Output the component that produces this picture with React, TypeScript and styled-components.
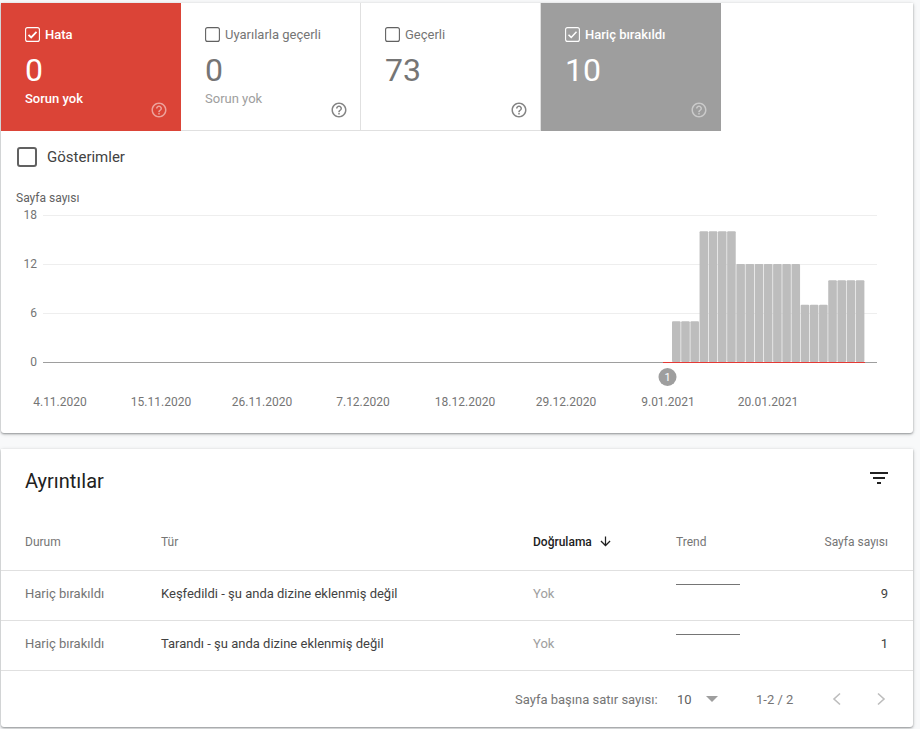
import React from 'react';
import styled, {createGlobalStyle} from 'styled-components';

const GlobalStyle = createGlobalStyle`
  html, body {
    margin: 0;
    padding: 0;
    background: #f8f9fa;
    font-family: Roboto, "Liberation Sans", sans-serif;
    color: #212121;
  }
`;

const Page = styled.div`
  display: grid;
  grid-row-gap: 16px;
  width: 912px;
  padding: 3px 0 2px 1px;
`;

const Card = styled.section`
  background: #fff;
  border-radius: 0 0 3px 3px;
  box-shadow: 0 1px 2px rgba(60, 64, 67, 0.45), 0 1px 4px rgba(60, 64, 67, 0.2);
  overflow: hidden;
`;

const Tiles = styled.div`
  display: flex;
  height: 128px;
`;

const tileColors = {
  error: {bg: '#db4437', fg: '#fff', sub: '#fff', num: '#fff', help: 'rgba(255,255,255,0.5)'},
  plain: {bg: '#fff', fg: '#757575', sub: '#9e9e9e', num: '#757575', help: '#858585'},
  excluded: {bg: '#9e9e9e', fg: '#fff', sub: '#fff', num: '#fff', help: 'rgba(255,255,255,0.45)'},
};

type TileKind = keyof typeof tileColors;

const TileBox = styled.div<{$kind: TileKind}>`
  box-sizing: border-box;
  width: 180px;
  display: flex;
  flex-direction: column;
  padding: 22px 13px 12px 24px;
  background: ${({$kind}) => tileColors[$kind].bg};
  color: ${({$kind}) => tileColors[$kind].fg};
  ${({$kind}) =>
    $kind === 'plain' &&
    `
    padding-right: 12px;
    padding-bottom: 11px;
    border-bottom: 1px solid #e0e0e0;
    border-right: 1px solid #e0e0e0;
  `}
`;

const TileLabel = styled.div<{$on: boolean}>`
  display: flex;
  align-items: center;
  flex: none;
  height: 18px;
  font-size: 13px;
  font-weight: ${({$on}) => ($on ? 500 : 400)};
  white-space: nowrap;
`;

const SmallCheck = styled.svg`
  width: 15px;
  height: 15px;
  margin-right: 5px;
  flex: none;
`;

const TileNumber = styled.div<{$kind: TileKind}>`
  flex: none;
  margin-top: 7px;
  font-size: 32px;
  line-height: 40px;
  font-weight: 400;
  color: ${({$kind}) => tileColors[$kind].num};
`;

const TileFoot = styled.div`
  display: flex;
  flex: none;
  height: 29px;
  margin-top: auto;
  align-items: flex-end;
`;

const TileSub = styled.div<{$kind: TileKind}>`
  align-self: flex-start;
  font-size: 13px;
  line-height: 18px;
  font-weight: ${({$kind}) => ($kind === 'error' ? 500 : 400)};
  color: ${({$kind}) => tileColors[$kind].sub};
`;

const HelpIcon = styled.svg<{$kind: TileKind}>`
  flex: none;
  width: 18px;
  height: 18px;
  margin-left: auto;
  fill: ${({$kind}) => tileColors[$kind].help};
`;

const ImpressionsRow = styled.label`
  display: flex;
  align-items: center;
  height: 20px;
  padding: 16px 0 0 16px;
  font-size: 15px;
  color: #424242;
`;

const ImpressionsBox = styled.span`
  box-sizing: border-box;
  width: 20px;
  height: 20px;
  margin-right: 10px;
  border: 2px solid #616161;
  border-radius: 3px;
`;

const ChartTitle = styled.div`
  margin: 24px 0 0 15px;
  font-size: 12px;
  line-height: 14px;
  color: #616161;
`;

const ChartSvg = styled.svg`
  display: block;
  width: 912px;
  height: 228px;
  font-family: Roboto, "Liberation Sans", sans-serif;
`;

const DetailsHeader = styled.div`
  display: flex;
  justify-content: space-between;
  align-items: center;
  height: 64px;
  padding: 0 22px 0 24px;
`;

const DetailsTitle = styled.h2`
  margin: 0;
  font-size: 20px;
  font-weight: 400;
  color: #212121;
`;

const FilterIcon = styled.svg`
  width: 24px;
  height: 24px;
  margin-top: -6px;
  fill: #212121;
`;

const Row = styled.div<{$head?: boolean}>`
  display: grid;
  grid-template-columns: 136px 372px 143px 1fr;
  align-items: center;
  box-sizing: border-box;
  height: ${({$head}) => ($head ? '58px' : '50px')};
  padding: 0 25px ${({$head}) => ($head ? '0' : '5px')} 24px;
  border-bottom: 1px solid #e0e0e0;
  font-size: ${({$head}) => ($head ? '12px' : '13px')};
`;

const Muted = styled.div`
  color: #757575;
`;

const Strong = styled.div`
  color: #424242;
`;

const Soft = styled.div`
  color: #9e9e9e;
`;

const SortHead = styled.div`
  display: flex;
  align-items: center;
  font-weight: 500;
  color: #212121;
`;

const SortArrow = styled.svg`
  width: 15px;
  height: 15px;
  margin-left: 6px;
  fill: #212121;
`;

const TrendCell = styled.div`
  display: flex;
  justify-content: space-between;
  align-items: center;
`;

const Spark = styled.svg`
  width: 64px;
  height: 1px;
  margin-bottom: 18px;
`;

const Footer = styled.div`
  display: flex;
  align-items: center;
  height: 56px;
  padding-left: 514px;
  font-size: 13px;
  color: #757575;

  > * {
    flex: none;
  }
`;

const PerPage = styled.span`
  width: 162px;
`;

const PerPageValue = styled.span`
  width: 29px;
  font-size: 13px;
  color: #616161;
`;

const Caret = styled.span`
  width: 0;
  height: 0;
  margin-right: 38px;
  border-left: 6px solid transparent;
  border-right: 6px solid transparent;
  border-top: 6px solid #9e9e9e;
`;

const PageRange = styled.span`
  width: 75px;
`;

const Chevron = styled.svg`
  width: 12px;
  height: 14px;
  margin-right: 32px;
  fill: none;
  stroke: #bdbdbd;
  stroke-width: 1.6;
`;

const HELP_PATH =
  'M11 18h2v-2h-2v2zm1-16C6.48 2 2 6.48 2 12s4.48 10 10 10 10-4.48 10-10S17.52 2 12 2zm0 18c-4.41 0-8-3.59-8-8s3.59-8 8-8 8 3.59 8 8-3.59 8-8 8zm0-14c-2.21 0-4 1.79-4 4h2c0-1.1.9-2 2-2s2 .9 2 2c0 2-3 1.75-3 5h2c0-2.25 3-2.5 3-5 0-2.21-1.79-4-4-4z';

const tiles: {kind: TileKind; label: string; value: string; sub?: string; on: boolean}[] = [
  {kind: 'error', label: 'Hata', value: '0', sub: 'Sorun yok', on: true},
  {kind: 'plain', label: 'Uyarılarla geçerli', value: '0', sub: 'Sorun yok', on: false},
  {kind: 'plain', label: 'Geçerli', value: '73', on: false},
  {kind: 'excluded', label: 'Hariç bırakıldı', value: '10', on: true},
];

const bars = [5, 5, 5, 16, 16, 16, 16, 12, 12, 12, 12, 12, 12, 12, 7, 7, 7, 10, 10, 10, 10];
const ticks = [18, 12, 6];
const dates = [
  {x: 59, label: '4.11.2020'},
  {x: 160, label: '15.11.2020'},
  {x: 261, label: '26.11.2020'},
  {x: 362, label: '7.12.2020'},
  {x: 464, label: '18.12.2020'},
  {x: 565, label: '29.12.2020'},
  {x: 667, label: '9.01.2021'},
  {x: 767, label: '20.01.2021'},
];

// chart svg starts at page y 205, page x 1
const zeroY = 157;
const unit = 147 / 18;
const barLeft = 671;
const barWidth = 193 / 21;

function Chart() {
  return (
    <ChartSvg viewBox="0 0 912 228">
      {ticks.map(t => (
        <g key={t}>
          <line x1="42" x2="876" y1={Math.round(zeroY - t * unit) + 0.5} y2={Math.round(zeroY - t * unit) + 0.5} stroke="#eeeeee" />
          <text x="36" y={zeroY - t * unit + 4} textAnchor="end" fontSize="12" fill="#757575">
            {t}
          </text>
        </g>
      ))}
      <text x="36" y={zeroY + 4} textAnchor="end" fontSize="12" fill="#757575">
        0
      </text>
      {bars.map((b, i) => (
        <rect
          key={i}
          x={barLeft + i * barWidth}
          y={zeroY - b * unit}
          width={barWidth - 0.6}
          height={b * unit}
          rx="1"
          fill="#bdbdbd"
        />
      ))}
      <rect x="42" y={zeroY} width="834" height="1" fill="#9e9e9e" />
      <rect x="662" y={zeroY} width="202" height="1" fill="#e53935" />
      <circle cx="666.5" cy="172" r="9" fill="#9e9e9e" />
      <text x="666.5" y="176" textAnchor="middle" fontSize="11" fill="#fff">
        1
      </text>
      {dates.map(d => (
        <text key={d.label} x={d.x} y="201" textAnchor="middle" fontSize="12" fill="#757575">
          {d.label}
        </text>
      ))}
    </ChartSvg>
  );
}

function TileCheck({on, kind}: {on: boolean; kind: TileKind}) {
  const stroke = on ? '#fff' : '#616161';
  return (
    <SmallCheck viewBox="0 0 15 15">
      <rect x="0.6" y="0.6" width="13.8" height="13.8" rx="2" fill="none" stroke={stroke} strokeWidth="1.1" />
      {on && <path d="M3.5 7.8l2.7 2.6 5.3-5.6" fill="none" stroke="#fff" strokeWidth={kind === 'error' ? 1.8 : 1.5} />}
    </SmallCheck>
  );
}

const rows = [
  {type: 'Keşfedildi - şu anda dizine eklenmiş değil', count: '9'},
  {type: 'Tarandı - şu anda dizine eklenmiş değil', count: '1'},
];

export default function App() {
  return (
    <>
      <GlobalStyle />
      <Page>
        <Card>
          <Tiles>
            {tiles.map(t => (
              <TileBox key={t.label} $kind={t.kind}>
                <TileLabel $on={t.on}>
                  <TileCheck on={t.on} kind={t.kind} />
                  {t.label}
                </TileLabel>
                <TileNumber $kind={t.kind}>{t.value}</TileNumber>
                <TileFoot>
                  {t.sub && <TileSub $kind={t.kind}>{t.sub}</TileSub>}
                  <HelpIcon $kind={t.kind} viewBox="0 0 24 24">
                    <path d={HELP_PATH} />
                  </HelpIcon>
                </TileFoot>
              </TileBox>
            ))}
          </Tiles>
          <ImpressionsRow>
            <ImpressionsBox />
            Gösterimler
          </ImpressionsRow>
          <ChartTitle>Sayfa sayısı</ChartTitle>
          <Chart />
        </Card>
        <Card>
          <DetailsHeader>
            <DetailsTitle>Ayrıntılar</DetailsTitle>
            <FilterIcon viewBox="0 0 24 24">
              <path d="M10 18h4v-2h-4v2zM3 6v2h18V6H3zm3 7h12v-2H6v2z" />
            </FilterIcon>
          </DetailsHeader>
          <Row $head>
            <Muted>Durum</Muted>
            <Muted>Tür</Muted>
            <SortHead>
              Doğrulama
              <SortArrow viewBox="0 0 24 24">
                <path d="M20 12l-1.41-1.41L13 16.17V4h-2v12.17l-5.58-5.59L4 12l8 8 8-8z" />
              </SortArrow>
            </SortHead>
            <TrendCell>
              <Muted>Trend</Muted>
              <Muted>Sayfa sayısı</Muted>
            </TrendCell>
          </Row>
          {rows.map(r => (
            <Row key={r.count}>
              <Muted>Hariç bırakıldı</Muted>
              <Strong>{r.type}</Strong>
              <Soft>Yok</Soft>
              <TrendCell>
                <Spark viewBox="0 0 64 1">
                  <rect width="64" height="1" fill="#757575" />
                </Spark>
                <Strong>{r.count}</Strong>
              </TrendCell>
            </Row>
          ))}
          <Footer>
            <PerPage>Sayfa başına satır sayısı:</PerPage>
            <PerPageValue>10</PerPageValue>
            <Caret />
            <PageRange>1-2 / 2</PageRange>
            <Chevron viewBox="0 0 12 14">
              <path d="M9 1.5L3 7l6 5.5" />
            </Chevron>
            <Chevron viewBox="0 0 12 14">
              <path d="M3 1.5L9 7l-6 5.5" />
            </Chevron>
          </Footer>
        </Card>
      </Page>
    </>
  );
}
